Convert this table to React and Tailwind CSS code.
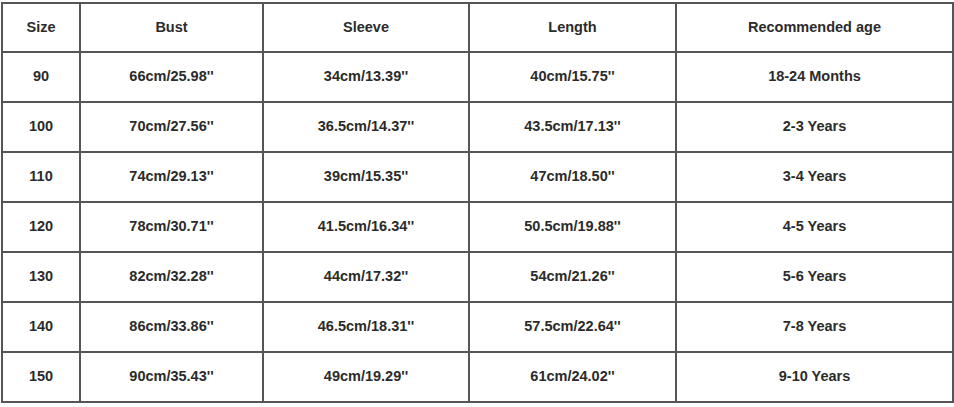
import React from 'react';

const rows = [
  ['90', '66cm/25.98"', '34cm/13.39"', '40cm/15.75"', '18-24 Months'],
  ['100', '70cm/27.56"', '36.5cm/14.37"', '43.5cm/17.13"', '2-3 Years'],
  ['110', '74cm/29.13"', '39cm/15.35"', '47cm/18.50"', '3-4 Years'],
  ['120', '78cm/30.71"', '41.5cm/16.34"', '50.5cm/19.88"', '4-5 Years'],
  ['130', '82cm/32.28"', '44cm/17.32"', '54cm/21.26"', '5-6 Years'],
  ['140', '86cm/33.86"', '46.5cm/18.31"', '57.5cm/22.64"', '7-8 Years'],
  ['150', '90cm/35.43"', '49cm/19.29"', '61cm/24.02"', '9-10 Years'],
];

const headers = ['Size', 'Bust', 'Sleeve', 'Length', 'Recommended age'];

export default function App() {
  return (
    <div className="w-[954px] h-[407px] bg-white pl-[1px] pt-[2px] font-['Liberation_Sans',Arial,sans-serif] text-[#2b2b2b]">
      <table className="w-[951px] table-fixed border-collapse border-2 border-[#555] text-[14.5px] font-bold">
        <colgroup>
          <col className="w-[78px]" />
          <col className="w-[183px]" />
          <col className="w-[206px]" />
          <col className="w-[207px]" />
          <col className="w-[277px]" />
        </colgroup>
        <thead>
          <tr className="h-[49px]">
            {headers.map(h => (
              <th key={h} className="border-2 border-[#555] text-center align-middle font-bold">
                {h}
              </th>
            ))}
          </tr>
        </thead>
        <tbody>
          {rows.map(row => (
            <tr key={row[0]} className="h-[50px]">
              {row.map((cell, i) => (
                <td key={i} className="border-2 border-[#555] text-center align-middle">
                  {cell.replace('"', "''")}
                </td>
              ))}
            </tr>
          ))}
        </tbody>
      </table>
    </div>
  );
}
